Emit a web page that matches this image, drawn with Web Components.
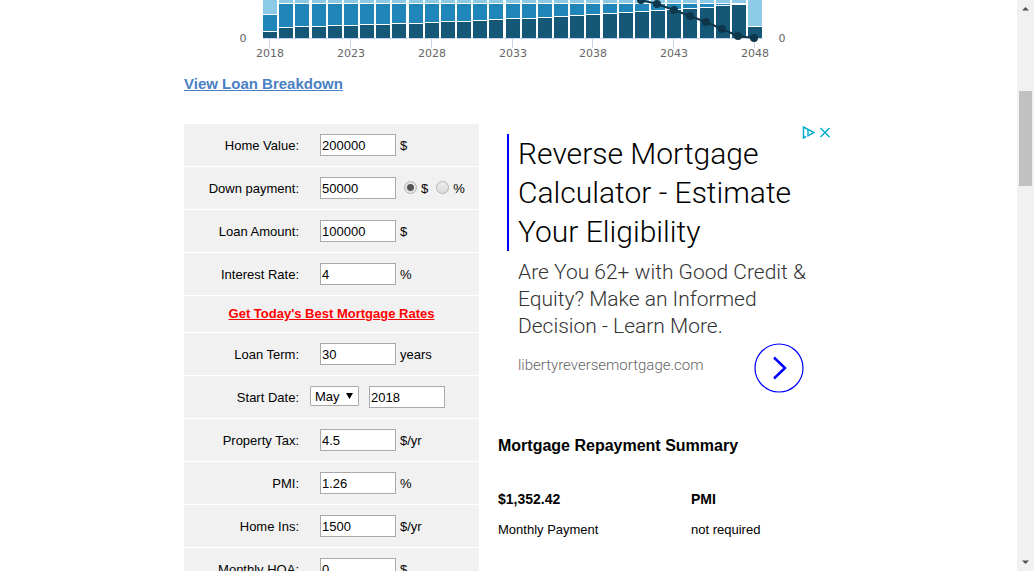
<!DOCTYPE html>
<html lang="en">
<head>
<meta charset="utf-8">
<title>Mortgage Calculator</title>
<style>
  body { margin: 0; background: #fff; color: #000; font: 13px/20px "Liberation Sans", Arial, sans-serif; }
</style>
</head>
<body>
<page-shell>
  <balance-chart></balance-chart>
  <breakdown-link>View Loan Breakdown</breakdown-link>
  <two-columns>
    <loan-form slot="form">
      <loan-field label="Home Value:" value="200000">$</loan-field>
      <down-payment-field></down-payment-field>
      <loan-field label="Loan Amount:" value="100000">$</loan-field>
      <loan-field label="Interest Rate:" value="4">%</loan-field>
      <rates-link>Get Today's Best Mortgage Rates</rates-link>
      <loan-field label="Loan Term:" value="30">years</loan-field>
      <start-date-field></start-date-field>
      <loan-field label="Property Tax:" value="4.5">$/yr</loan-field>
      <loan-field label="PMI:" value="1.26">%</loan-field>
      <loan-field label="Home Ins:" value="1500">$/yr</loan-field>
      <loan-field label="Monthly HOA:" value="0">$</loan-field>
    </loan-form>
    <text-ad slot="side">
      <span slot="title">Reverse Mortgage Calculator - Estimate Your Eligibility</span>
      <span slot="body">Are You 62+ with Good Credit &amp; Equity? Make an Informed Decision - Learn More.</span>
      <span slot="site">libertyreversemortgage.com</span>
    </text-ad>
    <repayment-summary slot="side">
      <span slot="heading">Mortgage Repayment Summary</span>
      <summary-item value="$1,352.42">Monthly Payment</summary-item>
      <summary-item value="PMI">not required</summary-item>
    </repayment-summary>
  </two-columns>
</page-shell>

<script>
const define = (name, html, setup) => {
  const template = document.createElement('template');
  template.innerHTML = html;
  customElements.define(name, class extends HTMLElement {
    constructor() {
      super();
      this.attachShadow({ mode: 'open' }).append(template.content.cloneNode(true));
    }
    connectedCallback() { if (setup) setup(this, this.shadowRoot); }
  });
};

define('page-scrollbar', `
  <style>
    :host { display: flex; flex-direction: column; background: #f1f1f1; }
    svg { display: block; width: 17px; height: 17px; flex: none; fill: #505050; }
    .track { flex: 1; padding: 74px 2px 0; }
    .thumb { height: 95px; background: #c1c1c1; }
  </style>
  <svg viewBox="0 0 17 17"><path d="M8.5 7 12 10.5H5z"/></svg>
  <div class="track"><div class="thumb"></div></div>
  <svg viewBox="0 0 17 17"><path d="M8.5 10 12 6.5H5z"/></svg>`);

define('page-shell', `
  <style>
    :host { display: grid; grid-template-columns: 1fr 17px; height: 100vh; overflow: hidden; }
    main { overflow: hidden; min-width: 0; }
    .content { max-width: 649px; margin: 0 auto; }
  </style>
  <main><div class="content"><slot></slot></div></main>
  <page-scrollbar></page-scrollbar>`);

define('balance-chart', `
  <style>
    :host { display: block; }
    svg { display: block; width: 100%; height: auto; }
    text { font: 11px "DejaVu Sans", Verdana, sans-serif; fill: #666; text-anchor: middle; }
    .light { fill: #8dcae8; } .mid { fill: #2085b8; } .dark { fill: #145777; }
    .axis { fill: #ccd6eb; }
    polyline { fill: none; stroke: #0f374b; stroke-width: 2; }
    circle { fill: #0f374b; }
  </style>
  <svg viewBox="0 0 649 64" role="img" aria-label="Loan balance by year"></svg>`,
  (host, root) => {
    const tops = [32, 28, 27, 27, 26, 26, 25, 25, 24, 24, 23, 22, 22, 21, 20, 19, 19, 18, 17, 16, 15, 14, 13, 12, 11, 10, 9, 8, 6, 5, 27];
    const centre = i => Math.round(86 + i * 485 / 30);
    const rect = (c, x, y, w, h) => h > 0 ? `<rect class="${c}" x="${x}" y="${y}" width="${w}" height="${h}"/>` : '';
    let out = rect('axis', 79, 38, 500, 1);
    tops.forEach((top, i) => {
      const x = centre(i) - 7;
      const last = i === 30;
      const mid = i === 0 ? 15 : last ? 27 : 4;
      out += rect('light', x, 0, 14, mid - 1);
      out += rect('mid', x, mid, 14, top - 1 - mid);
      out += rect('dark', x, top, 14, 38 - top);
      if (i % 5 === 0) {
        out += rect('axis', centre(i) - 1, 39, 1, 9);
        out += `<text x="${centre(i)}" y="57">${2018 + i}</text>`;
      }
    });
    const points = [[441, -6], [457, 0], [473, 4], [490, 10], [506, 16], [522, 22], [538, 29], [554, 36], [570, 38]];
    out += `<polyline points="${points.join(' ')}"/>`;
    out += points.map(([x, y]) => `<circle cx="${x}" cy="${y}" r="4"/>`).join('');
    out += '<text x="59" y="42">0</text><text x="598" y="42">0</text>';
    root.querySelector('svg').innerHTML = out;
  });

define('breakdown-link', `
  <style>
    :host { display: block; padding: 10px 0 29px; }
    a { color: #4a80c4; font-size: 15px; font-weight: bold; }
  </style>
  <a href="#breakdown"><slot></slot></a>`);

define('two-columns', `
  <style>
    :host { display: grid; grid-template-columns: 295px 1fr; column-gap: 19px; align-items: start; }
  </style>
  <slot name="form"></slot>
  <div><slot name="side"></slot></div>`);

define('loan-form', `
  <style>:host { display: flex; flex-direction: column; gap: 1px; }</style>
  <slot></slot>`);

const rowStyle = `
  :host { display: grid; grid-template-columns: 115px 1fr; align-items: center; min-height: 42px; background: #f1f1f1; }
  .name { text-align: right; }
  .cell { display: flex; align-items: center; padding-left: 21px; }
  input, select { box-sizing: border-box; margin: 0; font: inherit; color: #000; background: #fff; border: 1px solid #a9a9a9; }
  input[type=text] { width: 76px; height: 22px; padding: 0 1px; }
  .name, .unit, .choice { padding-top: 1px; }
  .unit { padding-left: 4px; }`;

define('loan-field', `
  <style>${rowStyle}</style>
  <label class="name" for="field"></label>
  <div class="cell"><input id="field" type="text"><span class="unit"><slot></slot></span></div>`,
  (host, root) => {
    root.querySelector('label').textContent = host.getAttribute('label');
    root.querySelector('input').value = host.getAttribute('value');
  });

define('down-payment-field', `
  <style>${rowStyle}
    .choice { display: flex; gap: 4px; padding-left: 8px; }
    input[type=radio] { appearance: none; width: 13px; height: 13px; margin-top: 2px; border-radius: 50%;
      border-color: #b4b4b4; background: linear-gradient(#ececec, #dcdcdc); }
    input[type=radio]:checked { background: radial-gradient(circle, #555 3px, #e4e4e4 4px); }
  </style>
  <label class="name" for="field">Down payment:</label>
  <div class="cell">
    <input id="field" type="text" value="50000">
    <label class="choice"><input type="radio" name="unit" checked>$</label>
    <label class="choice"><input type="radio" name="unit">%</label>
  </div>`);

define('start-date-field', `
  <style>${rowStyle}
    .cell { gap: 10px; align-items: flex-start; padding-left: 11px; }
    .month { display: grid; align-items: center; }
    .month > * { grid-area: 1 / 1; }
    select { appearance: none; width: 49px; height: 20px; padding: 0 4px; border-radius: 1px; }
    svg { width: 7px; height: 6px; justify-self: end; margin-right: 6px; pointer-events: none; }
  </style>
  <label class="name" for="month">Start Date:</label>
  <div class="cell">
    <span class="month">
      <select id="month"><option>May</option></select>
      <svg viewBox="0 0 7 6"><path d="M0 0h7L3.500 6z"/></svg>
    </span>
    <input type="text" value="2018" aria-label="Start year">
  </div>`);

define('rates-link', `
  <style>
    :host { display: block; padding: 8px 0; background: #f1f1f1; text-align: center; }
    a { color: #f00; font-weight: bold; }
  </style>
  <a href="#rates"><slot></slot></a>`);

define('text-ad', `
  <style>
    :host { display: block; position: relative; height: 280px; box-sizing: border-box; padding: 10px 9px 0;
      font-family: Roboto, sans-serif; font-weight: 300; }
    .tools { position: absolute; top: 2px; right: 2px; display: block; width: 29px; height: 13px;
      fill: none; stroke: #00aecd; }
    h2 { margin: 0; padding-left: 9px; border-left: 2px solid #00f; font-size: 30px; line-height: 39px; font-weight: 300; }
    p { margin: 8px 0 0; padding-left: 11px; color: #333; font-size: 21px; line-height: 27px; }
    .foot { display: flex; justify-content: space-between; padding: 3px 20px 0 11px; }
    .site { padding-top: 12px; color: #666; font-size: 15px; line-height: 20px; }
    a { display: block; height: 50px; }
    a svg { display: block; width: 50px; height: 50px; fill: none; stroke: #00f; }
  </style>
  <svg class="tools" viewBox="0 0 29 13">
    <path stroke-width="1.5" d="M4 10.5 1.5 12V1L12 6.5 6 9.8V4"/>
    <path stroke-width="1.5" d="m18.5 2 9 9m0-9-9 9"/>
  </svg>
  <h2><slot name="title"></slot></h2>
  <p><slot name="body"></slot></p>
  <div class="foot">
    <span class="site"><slot name="site"></slot></span>
    <a href="#ad" aria-label="Open"><svg viewBox="0 0 50 50"><circle cx="25" cy="25" r="24" stroke-width="1.2"/><path stroke-width="2.5" d="M20 14.500 31 25 20 35.500"/></svg></a>
  </div>`);

define('summary-item', `
  <style>
    :host { display: block; }
    b { display: block; margin-bottom: 11px; font-size: 14px; }
  </style>
  <b></b><slot></slot>`,
  (host, root) => { root.querySelector('b').textContent = host.getAttribute('value'); });

define('repayment-summary', `
  <style>
    :host { display: block; padding-top: 32px; }
    h2 { margin: 0 0 33px; font-size: 16px; line-height: 20px; }
    .items { display: grid; grid-template-columns: 193px 1fr; }
  </style>
  <h2><slot name="heading"></slot></h2>
  <div class="items"><slot></slot></div>`);
</script>
</body>
</html>
